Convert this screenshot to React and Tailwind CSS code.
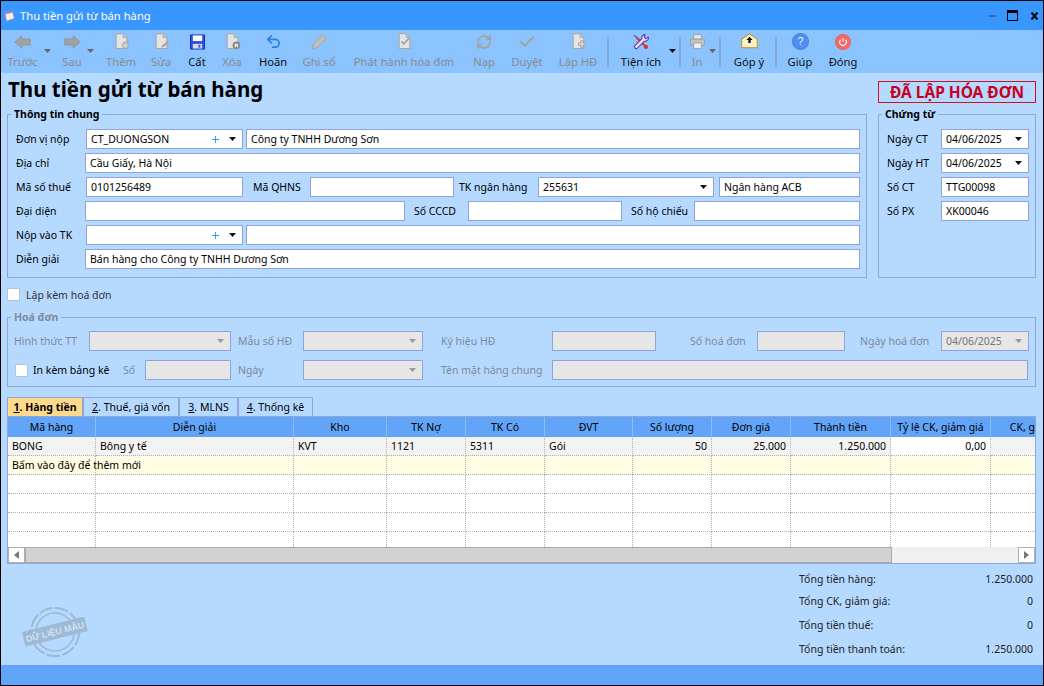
import React from 'react';
import { Undo2, RefreshCw, Check, Plus } from 'lucide-react';

const GRAY = '#a3a3a3';

const DocIcon = ({ badge }) => (
    <svg width="17" height="17" viewBox="0 0 22 22">
        <path d="M4 1h9l5 5v14H4z" fill="#e4e4e4" stroke="#a8a8a8" strokeWidth="1.5" />
        <path d="M13 1v5h5" fill="#c4c4c4" stroke="#a8a8a8" />
        {badge === 'plus' && <circle cx="16" cy="16" r="4" fill="#cfcfcf" stroke="#999" />}
        {badge === 'edit' && <path d="M11 19l1-3 7-6 2 2-7 6z" fill="#a5a5a5" />}
        {badge === 'x' && <>
            <circle cx="16" cy="16" r="5" fill="#8a8a8a" />
            <path d="M14 14l4 4M18 14l-4 4" stroke="#fff" strokeWidth="1.3" />
        </>}
        {badge === 'check' && <path d="M7 11l3 3 7-7" fill="none" stroke="#a0a0a0" strokeWidth="2" />}
        {badge === 'add' && <path d="M14 10h3v3h3v3h-3v3h-3v-3h-3v-3h3z" fill="#d8d8d8" stroke="#999" />}
    </svg>
);

const ArrowIcon = ({ right }) => (
    <svg width="17" height="14" viewBox="0 0 22 18">
        <path d={right ? 'M1 5h11V1l9 8-9 8v-4H1z' : 'M21 5H10V1L1 9l9 8v-4h11z'} fill="#a2a2a2" stroke="#8f8f8f" />
    </svg>
);

const SaveIcon = () => (
    <svg width="15" height="16" viewBox="0 0 16 16">
        <path d="M.5.5h15v15H.5z" fill="#2f50e8" stroke="#1226c8" />
        <path d="M3 1h10v6H3z" fill="#fff" />
        <path d="M3 10h10v5H3z" fill="#d7d7e8" />
        <path d="M9 11h2v3H9z" fill="#2f50e8" />
    </svg>
);

const PencilIcon = () => (
    <svg width="17" height="17" viewBox="0 0 18 18">
        <path d="M1.500 16.500l1-5L12.500 1.500l4 4-10 10z" fill="#bdbdbd" stroke="#a5a5a5" />
    </svg>
);

const ToolsIcon = () => (
    <svg width="18" height="18" viewBox="0 0 22 22">
        <path d="M3 2l4 4-1 1-4-4z" fill="#5f3fa8" />
        <path d="M6 6l11 11" stroke="#e03b3b" strokeWidth="3" />
        <path d="M16 2a4 4 0 0 0-4 5L3 16a2.500 2.500 0 0 0 3 3l9-9a4 4 0 0 0 5-5l-3 2-2-2z" fill="#e9e4fb" stroke="#5f3fa8" strokeWidth="1.300" />
        <circle cx="17" cy="17" r="2.500" fill="#d92f2f" />
    </svg>
);

const PrinterIcon = () => (
    <svg width="17" height="17" viewBox="0 0 22 22">
        <path d="M6 2h10v6H6z" fill="#e6e6e6" stroke="#999" />
        <path d="M2 8h18v8H2z" fill="#c2c2c2" stroke="#999" />
        <path d="M6 13h10v7H6z" fill="#eee" stroke="#999" />
    </svg>
);

const MailIcon = () => (
    <svg width="17" height="17" viewBox="0 0 22 22">
        <path d="M1 8l10-7 10 7v11H1z" fill="#fff2c8" stroke="#c08f2c" strokeWidth="1.300" />
        <path d="M11 5l4 4h-2.500v4h-3V9H7z" fill="#111" />
    </svg>
);

const HelpIcon = () => (
    <svg width="17" height="17" viewBox="0 0 22 22">
        <circle cx="11" cy="11" r="10.500" fill="#4f8ff0" stroke="#3a78dc" />
        <text x="11" y="16" textAnchor="middle" fontSize="14" fill="#e6f0ff" fontFamily="Liberation Sans, sans-serif">?</text>
    </svg>
);

const PowerIcon = () => (
    <svg width="16" height="16" viewBox="0 0 22 22">
        <circle cx="11" cy="11" r="10.500" fill="#f46a6a" stroke="#ec5555" />
        <path d="M7.800 8a4.500 4.500 0 1 0 6.400 0M11 5.500v5" fill="none" stroke="#fff" strokeWidth="1.400" />
    </svg>
);

const Caret = ({ color = '#555' }) => (
    <svg width="7" height="4" viewBox="0 0 7 4"><path d="M0 0h7L3.500 4z" fill={color} /></svg>
);

const Sep = () => <div className="w-[2px] h-[30px] bg-[#7fa9d8] self-center" />;

const ToolBtn = ({ w, label, on, caret, children }) => (
    <div className={`relative shrink-0 flex flex-col items-center ${w}`}>
        <div className="h-[17px] mt-[3px] flex items-center justify-center">{children}</div>
        <span className={`mt-[5px] text-[11.2px] leading-[14px] whitespace-nowrap ${on ? 'text-[#111]' : 'text-[#8a8a8a]'}`}>{label}</span>
        {caret && <span className={`absolute top-[19px] flex ${caret}`}><Caret color={on ? '#111' : '#666'} /></span>}
    </div>
);

const Box = ({ w, value, muted, children }) => (
    <div className={`h-[20px] shrink-0 flex items-center px-[4px] border border-[#8fa3d8] whitespace-nowrap overflow-hidden ${w} ${muted ? 'bg-[#e6e6e6] text-[#777]' : 'bg-white text-black'}`}>
        <span className="flex-1">{value}</span>
        {children}
    </div>
);

const Combo = ({ w, value, plus, muted }) => (
    <Box w={w} value={value} muted={muted}>
        {plus && <Plus size={11} strokeWidth={2} className="text-[#2f8ff5] mr-[8px]" />}
        <span className="mr-[2px] flex"><Caret color={muted ? '#999' : '#111'} /></span>
    </Box>
);

const Label = ({ w, children, muted }) => (
    <span className={`shrink-0 whitespace-nowrap ${w} ${muted ? 'text-[#7d8a99]' : 'text-black'}`}>{children}</span>
);

const Group = ({ title, className, muted, children }) => (
    <fieldset className={`border border-[#8fa7d4] ${className}`}>
        <legend className={`ml-[3px] px-[3px] font-bold text-[10.5px] leading-[14px] ${muted ? 'text-[#7d8a99]' : 'text-black'}`}>{title}</legend>
        {children}
    </fieldset>
);

const CheckBox = () => <span className="w-[13px] h-[13px] shrink-0 bg-white border border-[#b8c4d4]" />;

const columns = [
    { name: 'Mã hàng', v: 'BONG' },
    { name: 'Diễn giải', v: 'Bông y tế' },
    { name: 'Kho', v: 'KVT' },
    { name: 'TK Nợ', v: '1121' },
    { name: 'TK Có', v: '5311' },
    { name: 'ĐVT', v: 'Gói' },
    { name: 'Số lượng', v: '50', right: true },
    { name: 'Đơn giá', v: '25.000', right: true },
    { name: 'Thành tiền', v: '1.250.000', right: true },
    { name: 'Tỷ lệ CK, giảm giá', v: '0,00', right: true, white: true },
    { name: 'CK, giảm giá', v: '' },
];

const gridCols = 'grid grid-cols-[88px_198px_93px_79px_79px_88px_79px_79px_100px_100px_100px]';
const cell = 'border-r border-b border-dotted border-[#b0b0b0] px-[4px] flex items-center whitespace-nowrap';

const tabs = [
    { n: '1', t: '. Hàng tiền', w: 'w-[76px]', on: true },
    { n: '2', t: '. Thuế, giá vốn', w: 'w-[96px]' },
    { n: '3', t: '. MLNS', w: 'w-[59px]' },
    { n: '4', t: '. Thống kê', w: 'w-[75px]' },
];

const totals = [
    { l: 'Tổng tiền hàng:', v: '1.250.000', m: 'mt-[8px]' },
    { l: 'Tổng CK, giảm giá:', v: '0', m: 'mt-[8px]' },
    { l: 'Tổng tiền thuế:', v: '0', m: 'mt-[10px]' },
    { l: 'Tổng tiền thanh toán:', v: '1.250.000', m: 'mt-[10px]' },
];

export default function App() {
    return (
        <div className="relative w-[1044px] h-[686px] border border-black flex flex-col overflow-hidden bg-[#b5d9ff] text-[10.5px] leading-[14px] text-black font-['Noto_Sans',sans-serif]">
            <div className="h-[29px] shrink-0 bg-[#3896ff] flex items-center pl-[2px] pr-[5px]">
                <svg width="13" height="15" viewBox="0 0 15 15">
                    <path d="M2 4l9-2 2 9-9 3z" fill="#f4efe0" stroke="#9b8ac8" />
                    <path d="M2 4l9-2 .5 2-9 2z" fill="#8f7fd0" />
                </svg>
                <span className="ml-[4px] text-white text-[11.2px]">Thu tiền gửi từ bán hàng</span>
                <div className="ml-auto flex items-center">
                    <span className="w-[7px] h-[2px] bg-[#44668f]" />
                    <span className="ml-[11px] w-[11px] h-[11px] border border-black border-t-[3px]" />
                    <svg className="ml-[13px]" width="7" height="8" viewBox="0 0 7 8">
                        <path d="M.5 .5l6 7M6.500 .5l-6 7" stroke="#000" strokeWidth="2" />
                    </svg>
                </div>
            </div>

            <div className="h-[43px] shrink-0 bg-[#8bc3ff] flex">
                <ToolBtn w="w-[43px]" label="Trước" caret="left-[43px]"><ArrowIcon /></ToolBtn>
                <ToolBtn w="w-[44px] ml-[6px]" label="Sau" caret="left-[37px]"><ArrowIcon right /></ToolBtn>
                <ToolBtn w="w-[40px] ml-[7px]" label="Thêm"><DocIcon badge="plus" /></ToolBtn>
                <ToolBtn w="w-[40px]" label="Sửa"><DocIcon badge="edit" /></ToolBtn>
                <ToolBtn w="w-[32px]" label="Cất" on><SaveIcon /></ToolBtn>
                <ToolBtn w="w-[38px]" label="Xóa"><DocIcon badge="x" /></ToolBtn>
                <ToolBtn w="w-[44px]" label="Hoãn" on><Undo2 size={17} strokeWidth={2.4} className="text-[#2f7fdc]" /></ToolBtn>
                <ToolBtn w="w-[48px]" label="Ghi sổ"><PencilIcon /></ToolBtn>
                <ToolBtn w="w-[122px]" label="Phát hành hóa đơn"><DocIcon badge="check" /></ToolBtn>
                <ToolBtn w="w-[38px]" label="Nạp"><RefreshCw size={16} strokeWidth={2.8} color={GRAY} /></ToolBtn>
                <ToolBtn w="w-[48px]" label="Duyệt"><Check size={18} strokeWidth={3} color={GRAY} /></ToolBtn>
                <ToolBtn w="w-[54px]" label="Lập HĐ"><DocIcon badge="add" /></ToolBtn>
                <div className="ml-[2px] flex"><Sep /></div>
                <ToolBtn w="w-[60px] ml-[2px]" label="Tiện ích" on caret="left-[58px]"><ToolsIcon /></ToolBtn>
                <div className="ml-[8px] flex"><Sep /></div>
                <ToolBtn w="w-[28px] ml-[2px]" label="In" caret="left-[26px]"><PrinterIcon /></ToolBtn>
                <div className="ml-[8px] flex"><Sep /></div>
                <ToolBtn w="w-[48px] ml-[4px]" label="Góp ý" on><MailIcon /></ToolBtn>
                <div className="ml-[2px] flex"><Sep /></div>
                <ToolBtn w="w-[42px] ml-[2px]" label="Giúp" on><HelpIcon /></ToolBtn>
                <ToolBtn w="w-[44px]" label="Đóng" on><PowerIcon /></ToolBtn>
            </div>

            <div className="relative flex-1 min-h-0 pl-[6px] pr-[7px] flex flex-col">
                <div className="h-[34px] shrink-0 flex justify-between">
                    <h1 className="pl-[1px] mt-[3px] text-[20.500px] leading-[26px] font-bold text-black whitespace-nowrap">Thu tiền gửi từ bán hàng</h1>
                    <div className="mt-[8px] w-[158px] h-[22px] border border-[#d01020] flex items-center justify-center text-[15.500px] font-bold text-[#c8001e] whitespace-nowrap">ĐÃ LẬP HÓA ĐƠN</div>
                </div>

                <div className="h-[171px] shrink-0 flex justify-between">
                    <Group title="Thông tin chung" className="w-[860px] h-[171px]">
                        <div className="pl-[8px] pt-[8px] flex flex-col gap-[4px]">
                            <div className="flex items-center">
                                <Label w="w-[70px]">Đơn vị nộp</Label>
                                <Combo w="w-[157px]" value="CT_DUONGSON" plus />
                                <Box w="w-[614px] ml-[3px]" value="Công ty TNHH Dương Sơn" />
                            </div>
                            <div className="flex items-center">
                                <Label w="w-[69px]">Địa chỉ</Label>
                                <Box w="w-[775px]" value="Cầu Giấy, Hà Nội" />
                            </div>
                            <div className="flex items-center">
                                <Label w="w-[70px]">Mã số thuế</Label>
                                <Box w="w-[157px]" value="0101256489" />
                                <Label w="w-[67px] pl-[10px]">Mã QHNS</Label>
                                <Box w="w-[144px]" />
                                <Label w="w-[84px] pl-[5px]">TK ngân hàng</Label>
                                <Combo w="w-[176px]" value="255631" />
                                <Box w="w-[141px] ml-[5px]" value="Ngân hàng ACB" />
                            </div>
                            <div className="flex items-center">
                                <Label w="w-[69px]">Đại diện</Label>
                                <Box w="w-[320px]" />
                                <Label w="w-[63px] pl-[9px]">Số CCCD</Label>
                                <Box w="w-[154px]" />
                                <Label w="w-[72px] pl-[9px]">Số hộ chiếu</Label>
                                <Box w="w-[166px]" />
                            </div>
                            <div className="flex items-center">
                                <Label w="w-[70px]">Nộp vào TK</Label>
                                <Combo w="w-[157px]" plus />
                                <Box w="w-[614px] ml-[3px]" />
                            </div>
                            <div className="flex items-center">
                                <Label w="w-[69px]">Diễn giải</Label>
                                <Box w="w-[775px]" value="Bán hàng cho Công ty TNHH Dương Sơn" />
                            </div>
                        </div>
                    </Group>
                    <Group title="Chứng từ" className="w-[158px] h-[171px]">
                        <div className="pl-[8px] pt-[8px] flex flex-col gap-[4px]">
                            <div className="flex items-center"><Label w="w-[54px]">Ngày CT</Label><Combo w="w-[88px]" value="04/06/2025" /></div>
                            <div className="flex items-center"><Label w="w-[54px]">Ngày HT</Label><Combo w="w-[88px]" value="04/06/2025" /></div>
                            <div className="flex items-center"><Label w="w-[54px]">Số CT</Label><Box w="w-[88px]" value="TTG00098" /></div>
                            <div className="flex items-center"><Label w="w-[54px]">Số PX</Label><Box w="w-[88px]" value="XK00046" /></div>
                        </div>
                    </Group>
                </div>

                <div className="h-[13px] mt-[10px] shrink-0 flex items-center">
                    <CheckBox />
                    <span className="ml-[6px] text-[#333]">Lập kèm hoá đơn</span>
                </div>

                <Group title="Hoá đơn" muted className="mt-[9px] h-[77px] shrink-0">
                    <div className="pl-[6px] pt-[7px]">
                        <div className="flex items-center">
                            <Label muted w="w-[75px]">Hình thức TT</Label>
                            <Combo muted w="w-[142px]" />
                            <Label muted w="w-[72px] pl-[7px]">Mẫu số HĐ</Label>
                            <Combo muted w="w-[120px]" />
                            <Label muted w="w-[129px] pl-[18px]">Ký hiệu HĐ</Label>
                            <Box muted w="w-[104px]" />
                            <Label muted w="w-[101px] pl-[34px]">Số hoá đơn</Label>
                            <Box muted w="w-[88px]" />
                            <Label muted w="w-[96px] pl-[15px]">Ngày hoá đơn</Label>
                            <Combo muted w="w-[88px]" value="04/06/2025" />
                        </div>
                        <div className="mt-[9px] flex items-center">
                            <span className="ml-[1px] flex"><CheckBox /></span>
                            <Label w="w-[95px] pl-[5px]">In kèm bảng kê</Label>
                            <Label muted w="w-[22px]">Số</Label>
                            <Box muted w="w-[86px]" />
                            <Label muted w="w-[72px] pl-[7px]">Ngày</Label>
                            <Combo muted w="w-[120px]" />
                            <Label muted w="w-[129px] pl-[18px]">Tên mặt hàng chung</Label>
                            <Box muted w="w-[476px]" />
                        </div>
                    </div>
                </Group>

                <div className="mt-[10px] h-[19px] shrink-0 flex">
                    {tabs.map(t => (
                        <div key={t.n} className={`${t.w} flex items-center justify-center border border-b-0 border-[#8fa7d4] ${t.on ? 'bg-[#ffd98c] font-bold' : ''}`}>
                            <span className="underline">{t.n}</span>{t.t}
                        </div>
                    ))}
                </div>

                <div className="h-[148px] shrink-0 border border-[#8fa7d4] bg-white overflow-hidden flex flex-col">
                    <div className={`${gridCols} h-[20px] shrink-0 bg-[#62a4f8]`}>
                        {columns.map(c => (
                            <div key={c.name} className="border-r border-[#8fbdf5] flex items-center justify-center whitespace-nowrap px-[2px]">{c.name}</div>
                        ))}
                    </div>
                    <div className="flex-1 min-h-0 overflow-hidden">
                        <div className={`${gridCols} h-[19px]`}>
                            {columns.map(c => (
                                <div key={c.name} className={`${cell} ${c.right ? 'justify-end' : ''} ${c.white ? 'bg-white' : 'bg-[#f3f3f3]'}`}>{c.v}</div>
                            ))}
                        </div>
                        <div className={`${gridCols} h-[19px] bg-[#fffde3]`}>
                            {columns.map((c, i) => (
                                <div key={c.name} className={cell}>{i === 0 ? 'Bấm vào đây để thêm mới' : ''}</div>
                            ))}
                        </div>
                        {[0, 1, 2, 3].map(r => (
                            <div key={r} className={`${gridCols} h-[19px]`}>
                                {columns.map(c => <div key={c.name} className={cell} />)}
                            </div>
                        ))}
                    </div>
                    <div className="h-[16px] shrink-0 flex bg-[#f0f0f0]">
                        <span className="w-[17px] border border-[#b0b0b0] bg-white flex items-center justify-center">
                            <svg width="5" height="8" viewBox="0 0 5 8"><path d="M5 0v8L0 4z" fill="#777" /></svg>
                        </span>
                        <span className="w-[867px] bg-[#d2d2d2] border border-[#a8a8a8]" />
                        <span className="ml-auto w-[17px] border border-[#b0b0b0] bg-white flex items-center justify-center">
                            <svg width="5" height="8" viewBox="0 0 5 8"><path d="M0 0v8l5-4z" fill="#777" /></svg>
                        </span>
                    </div>
                </div>

                <div className="flex-1 flex flex-col items-end pr-[3px]">
                    {totals.map(t => (
                        <div key={t.l} className={`w-[234px] flex justify-between text-[#222] ${t.m}`}>
                            <span>{t.l}</span><span>{t.v}</span>
                        </div>
                    ))}
                </div>

                <svg className="absolute left-[21px] bottom-[3px]" width="72" height="58" viewBox="0 0 72 58">
                    <g fill="none" stroke="#9db9d3">
                        <circle cx="33" cy="28" r="24" strokeWidth="2" strokeDasharray="14 2" />
                        <circle cx="33" cy="28" r="19" strokeWidth="1.500" />
                    </g>
                    <g transform="rotate(-14 33 28)">
                        <rect x="1" y="20" width="64" height="15" fill="#9db9d3" />
                        <text x="33" y="31" textAnchor="middle" fontSize="9" fontWeight="bold" fill="#cfe3f5" fontFamily="Liberation Sans, sans-serif">DỮ LIỆU MẪU</text>
                    </g>
                </svg>
            </div>

            <div className="h-[20px] shrink-0 bg-[#62a4f8]" />
        </div>
    );
}
